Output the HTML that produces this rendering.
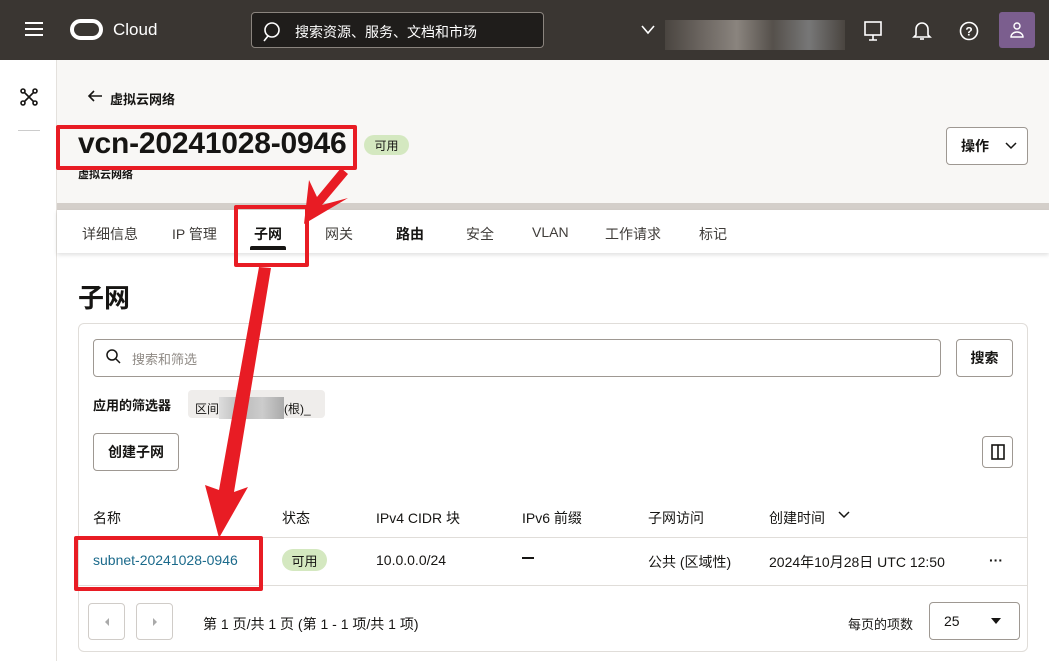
<!DOCTYPE html>
<html><head><meta charset="utf-8">
<style>
*{box-sizing:border-box;margin:0;padding:0}
body{width:1049px;height:661px;overflow:hidden;background:#fff;font-family:"Liberation Sans","Noto Sans CJK SC",sans-serif;color:#161513;position:relative;font-size:14px}
.top{position:absolute;left:0;top:0;width:1049px;height:60px;background:#3a3632}
.abs{position:absolute}
.rail{position:absolute;left:0;top:60px;width:57px;height:601px;background:#fff;border-right:1px solid #e4e1dd}
.hdr{position:absolute;left:57px;top:60px;width:992px;height:143px;background:#f8f7f5}
.band{position:absolute;left:57px;top:203px;width:992px;height:7px;background:#d4cfca}
.tabs{position:absolute;left:57px;top:210px;width:992px;height:43px;background:#fff;box-shadow:0 2px 4px rgba(0,0,0,.12)}
.tab{position:absolute;top:224px;font-size:14px;color:#3f3c39}
.btn{position:absolute;border:1px solid #9e9892;border-radius:4px;background:#fff;font-weight:bold;font-size:14px;display:flex;align-items:center;justify-content:center}
.red{position:absolute;border:4px solid #e81c24;border-radius:2px}
.th{position:absolute;top:508px;font-size:14px;color:#161513}
.td{position:absolute;top:552px;font-size:14px;color:#161513}
</style></head><body>
<div class="top">
  <div class="abs" style="left:25px;top:22px;width:18px;height:2px;background:#fff;box-shadow:0 6px 0 #fff,0 12px 0 #fff"></div>
  <div class="abs" style="left:70px;top:19px;width:33px;height:21px;border:4px solid #fff;border-radius:11px"></div>
  <div class="abs" style="left:113px;top:20px;color:#fff;font-size:17px">Cloud</div>
  <div class="abs" style="left:251px;top:12px;width:293px;height:36px;border:1px solid #8a847e;border-radius:4px;background:#1f1d1b"></div>
  <svg class="abs" style="left:262px;top:21px" width="22" height="22"><circle cx="10" cy="9" r="7" fill="none" stroke="#fff" stroke-width="1.6"/><path d="M6 15 L2 20" stroke="#fff" stroke-width="1.6"/></svg>
  <div class="abs" style="left:295px;top:22px;color:#fff;font-size:14px">搜索资源、服务、文档和市场</div>
  <svg class="abs" style="left:640px;top:24px" width="16" height="12"><path d="M2 2 L8 9 L14 2" fill="none" stroke="#fff" stroke-width="1.6"/></svg>
  <div class="abs" style="left:665px;top:20px;width:180px;height:30px;background:linear-gradient(90deg,#4a4540,#6b6560 20%,#8a847e 40%,#55504b 60%,#777 80%,#4a4540)"></div>
  <svg class="abs" style="left:862px;top:20px" width="22" height="22"><rect x="3" y="2" width="16" height="13" fill="none" stroke="#fff" stroke-width="1.6"/><path d="M11 15 V20 M7 20 H15" stroke="#fff" stroke-width="1.6"/></svg>
  <svg class="abs" style="left:912px;top:20px" width="20" height="22"><path d="M4 15 V9 a6 6 0 0 1 12 0 V15 L18 17 H2 Z" fill="none" stroke="#fff" stroke-width="1.6"/><path d="M8 19 h4" stroke="#fff" stroke-width="1.6"/></svg>
  <svg class="abs" style="left:958px;top:20px" width="22" height="22"><circle cx="11" cy="11" r="8.5" fill="none" stroke="#fff" stroke-width="1.6"/><text x="11" y="15.5" font-size="12" fill="#fff" text-anchor="middle" font-family="Liberation Sans" font-weight="bold">?</text></svg>
  <div class="abs" style="left:999px;top:12px;width:36px;height:36px;border-radius:3px;background:#7b5e8e"></div>
  <svg class="abs" style="left:1008px;top:20px" width="18" height="20"><circle cx="9" cy="6" r="3" fill="none" stroke="#fff" stroke-width="1.4"/><path d="M3 17 a6 5 0 0 1 12 0 Z" fill="none" stroke="#fff" stroke-width="1.4"/></svg>
</div>
<div class="rail">
  <svg class="abs" style="left:19px;top:27px" width="20" height="20"><circle cx="4" cy="4" r="2" fill="none" stroke="#161513" stroke-width="1.6"/><circle cx="16" cy="4" r="2" fill="none" stroke="#161513" stroke-width="1.6"/><circle cx="4" cy="16" r="2" fill="none" stroke="#161513" stroke-width="1.6"/><circle cx="16" cy="16" r="2" fill="none" stroke="#161513" stroke-width="1.6"/><path d="M5.5 5.5 L14.5 14.5 M14.5 5.5 L5.5 14.5" stroke="#161513" stroke-width="1.6"/></svg>
  <div class="abs" style="left:18px;top:70px;width:22px;height:1px;background:#ccc"></div>
</div>
<div class="hdr"></div>
<svg class="abs" style="left:86px;top:88px" width="18" height="16"><path d="M16 8 H3 M8 3 L3 8 L8 13" fill="none" stroke="#161513" stroke-width="1.6"/></svg>
<div class="abs" style="left:110px;top:89px;font-size:13px;font-weight:bold">虚拟云网络</div>
<div class="abs" style="left:78px;top:127px;font-size:30px;font-weight:bold;letter-spacing:-0.2px">vcn-20241028-0946</div>
<div class="abs" style="left:364px;top:135px;width:45px;height:20px;border-radius:10px;background:#d4e8c0;font-size:12px;display:flex;align-items:center;justify-content:center">可用</div>
<div class="abs" style="left:78px;top:166px;font-size:11px;font-weight:bold">虚拟云网络</div>
<div class="btn" style="left:946px;top:127px;width:82px;height:38px;justify-content:flex-start;padding-left:14px">操作<svg style="margin-left:16px" width="12" height="8"><path d="M1 1 L6 6 L11 1" fill="none" stroke="#161513" stroke-width="1.5"/></svg></div>
<div class="band"></div>
<div class="tabs"></div>
<div class="tab" style="left:82px">详细信息</div>
<div class="tab" style="left:172px">IP 管理</div>
<div class="tab" style="left:254px;font-weight:bold;color:#161513">子网</div>
<div class="abs" style="left:250px;top:246px;width:36px;height:4px;background:#161513;border-radius:2px 2px 0 0"></div>
<div class="tab" style="left:325px">网关</div>
<div class="tab" style="left:396px;font-weight:bold;color:#161513">路由</div>
<div class="tab" style="left:466px">安全</div>
<div class="tab" style="left:532px">VLAN</div>
<div class="tab" style="left:605px">工作请求</div>
<div class="tab" style="left:699px">标记</div>
<div class="abs" style="left:78px;top:278px;font-size:26px;font-weight:bold">子网</div>
<div class="abs" style="left:78px;top:323px;width:950px;height:329px;border:1px solid #e0ddd9;border-radius:6px"></div>
<div class="abs" style="left:93px;top:339px;width:848px;height:38px;border:1px solid #9e9892;border-radius:4px"></div>
<svg class="abs" style="left:105px;top:348px" width="18" height="18"><circle cx="7" cy="7" r="5" fill="none" stroke="#161513" stroke-width="1.5"/><path d="M11 11 L15 15" stroke="#161513" stroke-width="1.5"/></svg>
<div class="abs" style="left:132px;top:349px;font-size:13px;color:#8f8a85">搜索和筛选</div>
<div class="btn" style="left:956px;top:339px;width:57px;height:38px">搜索</div>
<div class="abs" style="left:93px;top:395px;font-size:13px;font-weight:bold">应用的筛选器</div>
<div class="abs" style="left:188px;top:390px;width:137px;height:28px;background:#efedeb;border-radius:4px;font-size:12px;padding:7px 0 0 7px">区间<span style="display:inline-block;width:65px;height:22px;vertical-align:-6px;background:linear-gradient(90deg,#ddd,#bbb,#ccc,#aaa)"></span>(根)_</div>
<div class="btn" style="left:93px;top:433px;width:86px;height:38px">创建子网</div>
<div class="btn" style="left:982px;top:436px;width:31px;height:32px"><svg width="14" height="16"><rect x="1" y="1" width="12" height="14" fill="none" stroke="#161513" stroke-width="1.6"/><path d="M7 1 V15" stroke="#161513" stroke-width="1.6"/></svg></div>
<div class="th" style="left:93px">名称</div>
<div class="th" style="left:282px">状态</div>
<div class="th" style="left:376px">IPv4 CIDR 块</div>
<div class="th" style="left:522px">IPv6 前缀</div>
<div class="th" style="left:648px">子网访问</div>
<div class="th" style="left:769px">创建时间</div>
<svg class="abs" style="left:838px;top:511px" width="12" height="8"><path d="M1 1 L6 6 L11 1" fill="none" stroke="#161513" stroke-width="1.5"/></svg>
<div class="abs" style="left:79px;top:537px;width:948px;height:1px;background:#e0ddd9"></div>
<div class="abs" style="left:79px;top:585px;width:948px;height:1px;background:#e0ddd9"></div>
<div class="td" style="left:93px;color:#1b6a8b">subnet-20241028-0946</div>
<div class="abs" style="left:282px;top:549px;width:45px;height:22px;border-radius:11px;background:#d4e8c0;font-size:13px;display:flex;align-items:center;justify-content:center">可用</div>
<div class="td" style="left:376px">10.0.0.0/24</div>
<div class="abs" style="left:522px;top:557px;width:12px;height:2px;background:#161513"></div>
<div class="td" style="left:648px">公共 (区域性)</div>
<div class="td" style="left:769px">2024年10月28日 UTC 12:50</div>
<div class="td" style="left:989px;font-weight:bold;top:552px">···</div>
<div class="btn" style="left:88px;top:603px;width:37px;height:37px;border-color:#d0ccc8"><svg width="8" height="10"><path d="M6 1 L2 5 L6 9 Z" fill="#aaa"/></svg></div>
<div class="btn" style="left:136px;top:603px;width:37px;height:37px;border-color:#d0ccc8"><svg width="8" height="10"><path d="M2 1 L6 5 L2 9 Z" fill="#aaa"/></svg></div>
<div class="abs" style="left:203px;top:614px;font-size:14px">第 1 页/共 1 页 (第 1 - 1 项/共 1 项)</div>
<div class="abs" style="left:848px;top:614px;font-size:13px">每页的项数</div>
<div class="btn" style="left:929px;top:602px;width:91px;height:38px;font-weight:normal;justify-content:space-between;padding:0 18px 0 14px">25<svg width="10" height="6"><path d="M0 0 H10 L5 6 Z" fill="#161513"/></svg></div>
<div class="red" style="left:56px;top:125px;width:301px;height:45px"></div>
<div class="red" style="left:234px;top:205px;width:75px;height:62px"></div>
<div class="red" style="left:74px;top:536px;width:189px;height:55px"></div>
<svg class="abs" style="left:0;top:0" width="1049" height="661">
  <path d="M341 168 L348 174 L322 205 L348 198 L304 224 L309 180 L317 197 Z" fill="#e81c24"/>
  <path d="M259 267 L271 268 L234 492 L248 487 L219 538 L205 485 L219 490 Z" fill="#e81c24"/>
</svg>
</body></html>
